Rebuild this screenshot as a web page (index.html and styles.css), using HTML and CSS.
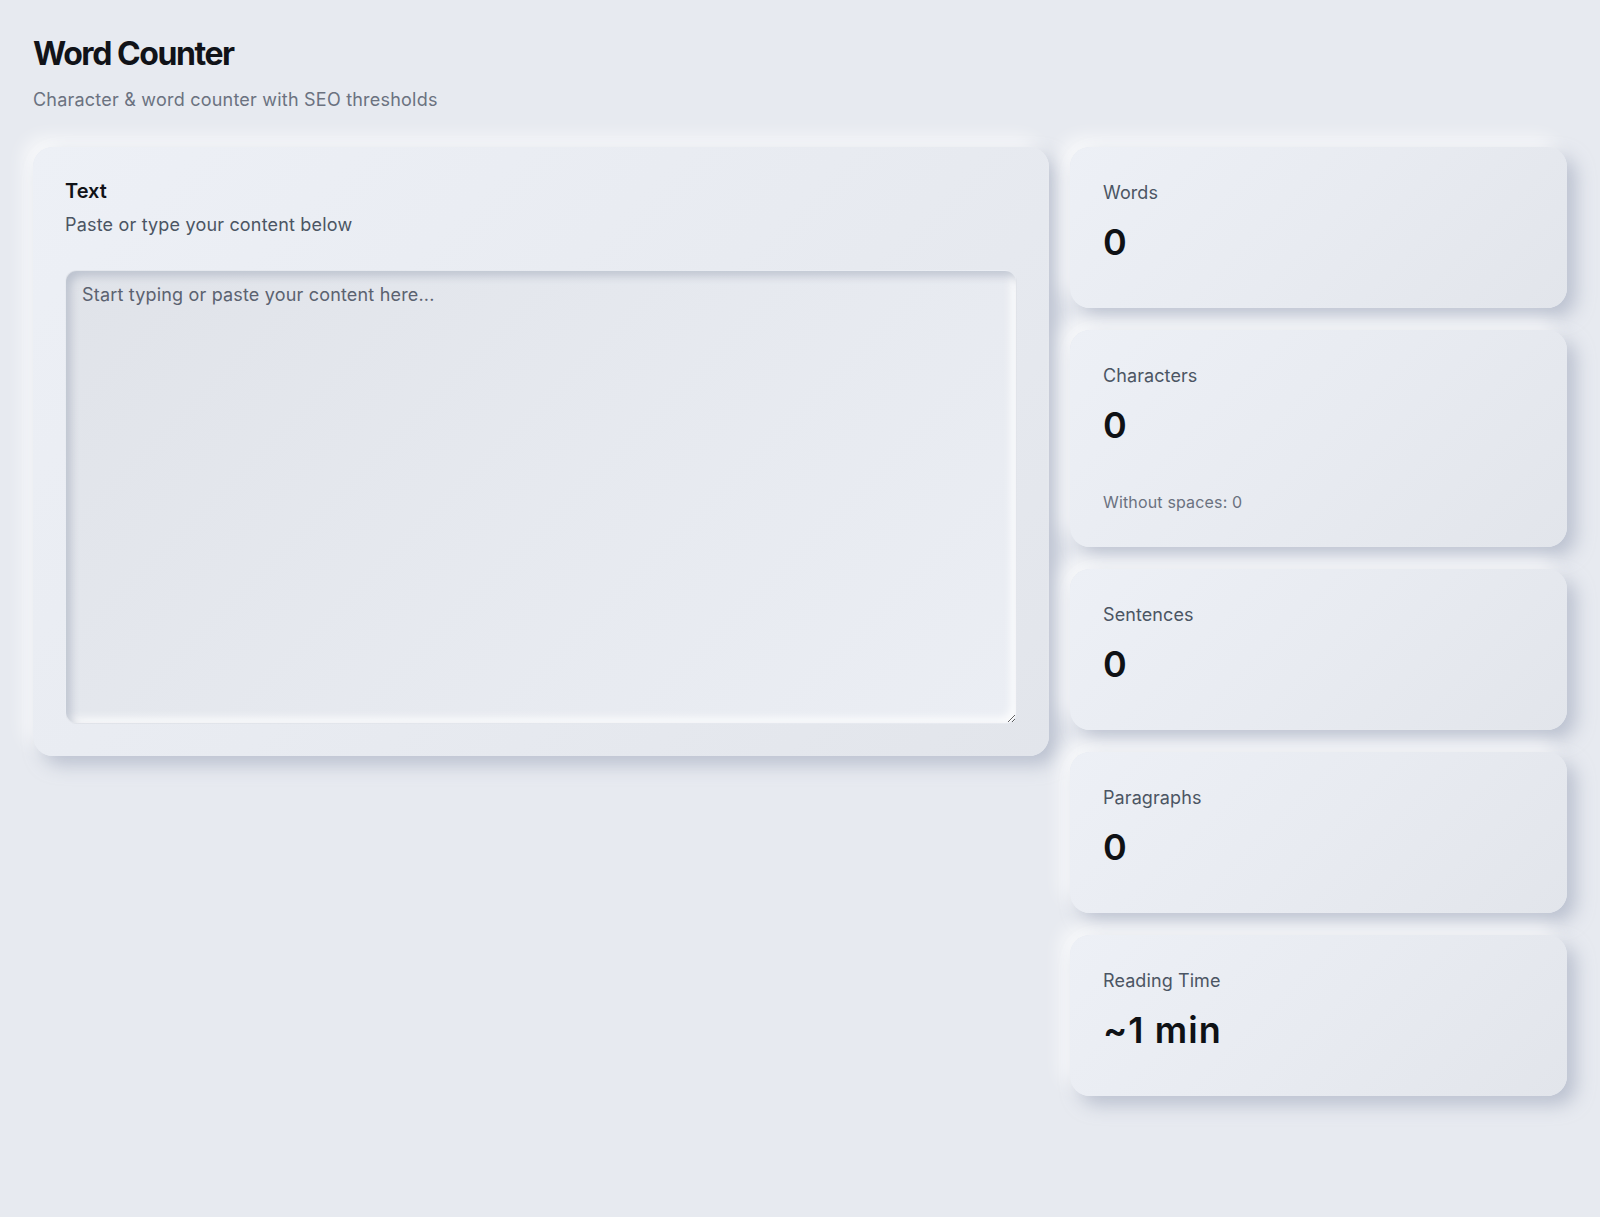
FILE: index.html
```html
<!DOCTYPE html>
<html lang="en">
<head>
    <meta charset="UTF-8">
    <title>Word Counter</title>
    <link rel="stylesheet" href="styles.css">
</head>
<body>
    <div class="page">
        <header class="page-header">
            <h1 class="page-title">Word Counter</h1>
            <p class="page-subtitle">Character &amp; word counter with SEO thresholds</p>
        </header>

        <div class="layout">
            <section class="card editor-card">
                <h2 class="editor-title">Text</h2>
                <p class="editor-desc">Paste or type your content below</p>
                <textarea id="textInput" class="editor-input" placeholder="Start typing or paste your content here..."></textarea>
            </section>

            <aside class="stats">
                <div class="card stat-card">
                    <div class="stat-label">Words</div>
                    <div class="stat-value" id="wordCount">0</div>
                </div>
                <div class="card stat-card">
                    <div class="stat-label">Characters</div>
                    <div class="stat-value" id="charCount">0</div>
                    <div class="stat-sub" id="charNoSpaces">Without spaces: 0</div>
                </div>
                <div class="card stat-card">
                    <div class="stat-label">Sentences</div>
                    <div class="stat-value" id="sentenceCount">0</div>
                </div>
                <div class="card stat-card">
                    <div class="stat-label">Paragraphs</div>
                    <div class="stat-value" id="paragraphCount">0</div>
                </div>
                <div class="card stat-card">
                    <div class="stat-label">Reading Time</div>
                    <div class="stat-value" id="readingTime">~1 min</div>
                </div>
            </aside>
        </div>
    </div>

    <script>
        const input = document.getElementById('textInput');

        function updateCounts() {
            const text = input.value;
            const words = text.trim() ? text.trim().split(/\s+/).length : 0;
            const sentences = text.split(/[.!?]+/).filter(s => s.trim()).length;
            const paragraphs = text.split(/\n\s*\n/).filter(p => p.trim()).length;
            document.getElementById('wordCount').innerText = words;
            document.getElementById('charCount').innerText = text.length;
            document.getElementById('charNoSpaces').innerText = 'Without spaces: ' + text.replace(/\s/g, '').length;
            document.getElementById('sentenceCount').innerText = sentences;
            document.getElementById('paragraphCount').innerText = paragraphs;
            document.getElementById('readingTime').innerText = '~' + Math.max(1, Math.ceil(words / 200)) + ' min';
        }

        input.addEventListener('input', updateCounts);
    </script>
</body>
</html>
```

FILE: styles.css
```css
body {
    margin: 0;
    background-color: #e7eaf0;
    color: #111827;
    font-family: 'Inter', 'Noto Sans', sans-serif;
}
.page {
    padding: 34px 33px 40px;
}
.page-title {
    margin: 0;
    font-size: 32px;
    line-height: 40px;
    font-weight: 700;
    letter-spacing: -0.045em;
    color: #111318;
}
.page-subtitle {
    margin: 12px 0 0;
    font-size: 18px;
    line-height: 28px;
    letter-spacing: 0.012em;
    color: #6b7280;
}
.layout {
    display: grid;
    grid-template-columns: 1fr 497px;
    gap: 21px;
    align-items: start;
    margin-top: 33px;
}
.card {
    border-radius: 20px;
    background: linear-gradient(135deg, #edf0f6 0%, #e8ebf1 50%, #e2e5eb 100%);
    box-shadow: 9px 9px 18px rgba(158, 167, 186, 0.6), -9px -9px 18px rgba(255, 255, 255, 0.75);
}
.editor-card {
    padding: 32px;
}
.editor-title {
    margin: 0;
    font-size: 20px;
    line-height: 24px;
    font-weight: 600;
    color: #111318;
}
.editor-desc {
    margin: 10px 0 0;
    font-size: 18px;
    line-height: 24px;
    letter-spacing: 0.01em;
    color: #4b5563;
}
.editor-input {
    display: block;
    box-sizing: border-box;
    width: 100%;
    height: 454px;
    margin-top: 33px;
    padding: 12px 16px;
    border: 1px solid transparent;
    border-radius: 12px;
    background: linear-gradient(135deg, #e0e3e9 0%, #e6e9ef 50%, #ebeef4 100%);
    box-shadow: inset 5px 5px 9px rgba(165, 173, 190, 0.6), inset -5px -5px 9px rgba(255, 255, 255, 0.85);
    font-family: inherit;
    font-size: 18px;
    line-height: 24px;
    letter-spacing: 0.01em;
    color: #111827;
    outline: none;
}
.editor-input::placeholder {
    color: #5b6270;
}
.stats {
    display: flex;
    flex-direction: column;
    gap: 22px;
}
.stat-card {
    padding: 32px 33px 39px;
}
.stat-label {
    font-size: 18px;
    line-height: 28px;
    letter-spacing: 0.005em;
    color: #4b5563;
}
.stat-value {
    margin-top: 8px;
    font-size: 36px;
    line-height: 54px;
    font-weight: 600;
    letter-spacing: 0.03em;
    color: #0f1115;
}
.stat-sub {
    margin: 40px 0 -4px;
    font-size: 16px;
    line-height: 20px;
    letter-spacing: 0.01em;
    color: #6b7280;
}
```
